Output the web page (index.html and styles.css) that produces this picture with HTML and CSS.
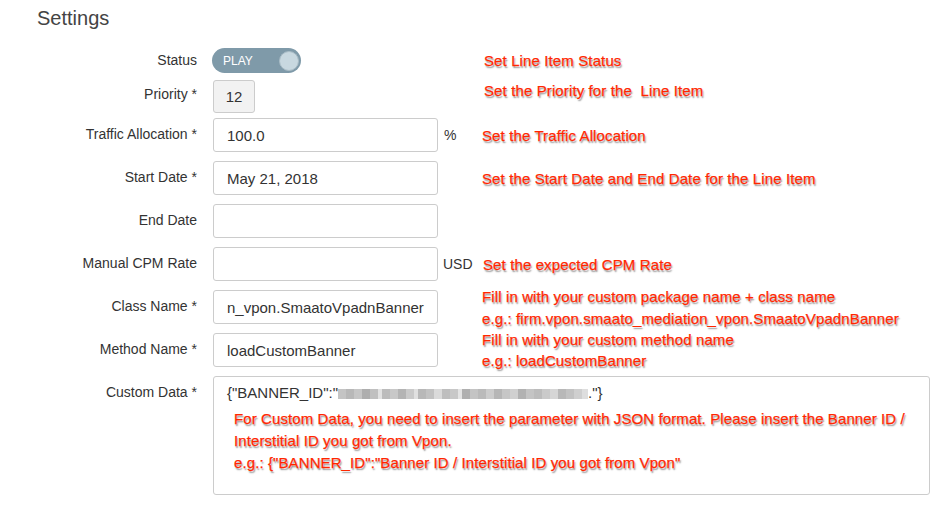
FILE: index.html
```html
<!DOCTYPE html>
<html>
<head>
<meta charset="utf-8">
<link rel="stylesheet" href="styles.css">
</head>
<body>
<div class="page">
  <h1 class="title">Settings</h1>
  <div class="form">
    <div class="row row-status">
      <div class="label lb-status">Status</div>
      <div class="control"><div class="toggle"><span class="toggle-text">PLAY</span><span class="knob"></span></div></div>
      <div class="unit"></div>
      <div class="note note-status">Set Line Item Status</div>
    </div>
    <div class="row row-priority">
      <div class="label lb-priority">Priority *</div>
      <div class="control"><div class="prio">12</div></div>
      <div class="unit"></div>
      <div class="note note-priority">Set the Priority for the&nbsp; Line Item</div>
    </div>
    <div class="row row-input">
      <div class="label">Traffic Allocation *</div>
      <div class="control"><div class="input">100.0</div></div>
      <div class="unit">%</div>
      <div class="note">Set the Traffic Allocation</div>
    </div>
    <div class="row row-input">
      <div class="label">Start Date *</div>
      <div class="control"><div class="input">May 21, 2018</div></div>
      <div class="unit"></div>
      <div class="note">Set the Start Date and End Date for the Line Item</div>
    </div>
    <div class="row row-input">
      <div class="label">End Date</div>
      <div class="control"><div class="input"></div></div>
      <div class="unit"></div>
      <div class="note"></div>
    </div>
    <div class="row row-input">
      <div class="label">Manual CPM Rate</div>
      <div class="control"><div class="input"></div></div>
      <div class="unit unit-usd">USD</div>
      <div class="note note-cpm">Set the expected CPM Rate</div>
    </div>
    <div class="row row-input">
      <div class="label">Class Name *</div>
      <div class="control"><div class="input">n_vpon.SmaatoVpadnBanner</div></div>
      <div class="unit"></div>
      <div class="note note-two note-class">Fill in with your custom package name + class name<br>e.g.: firm.vpon.smaato_mediation_vpon.SmaatoVpadnBanner</div>
    </div>
    <div class="row row-input">
      <div class="label">Method Name *</div>
      <div class="control"><div class="input">loadCustomBanner</div></div>
      <div class="unit"></div>
      <div class="note note-two note-method">Fill in with your custom method name<br>e.g.: loadCustomBanner</div>
    </div>
    <div class="row row-custom">
      <div class="label">Custom Data *</div>
      <div class="textarea">
        <div class="json">{"BANNER_ID":"<span class="blur"></span>."}</div>
        <div class="note-inner">For Custom Data, you need to insert the parameter with JSON format. Please insert the Banner ID /<br>Interstitial ID you got from Vpon.<br>e.g.: {"BANNER_ID":"Banner ID / Interstitial ID you got from Vpon"</div>
      </div>
    </div>
  </div>
</div>
</body>
</html>
```
FILE: styles.css
```css
* { box-sizing: border-box; }
html, body { margin: 0; padding: 0; background: #fff; }
body {
  font-family: "Liberation Sans", Arial, sans-serif;
  color: #333;
  width: 945px;
  height: 510px;
  overflow: hidden;
}
.page { padding-top: 6px; }
.title {
  margin: 0 0 0 37px;
  font-size: 20px;
  line-height: 24px;
  font-weight: normal;
  color: #444;
}
.form { padding-top: 18px; }
.row {
  display: grid;
  grid-template-columns: 213px 225px 44px 1fr;
  align-items: start;
}
.label {
  font-size: 14px;
  line-height: 20px;
  text-align: right;
  padding-right: 16px;
  padding-top: 6px;
  color: #333;
  white-space: nowrap;
}
.unit {
  font-size: 14px;
  line-height: 20px;
  padding-top: 7px;
  padding-left: 6px;
  color: #333;
}
.unit-usd { padding-left: 5px; }
.note {
  font-size: 15px;
  line-height: 22px;
  padding-top: 7px;
  color: #ff2600;
  white-space: nowrap;
  letter-spacing: 0.12px;
  -webkit-text-stroke: 0.25px #ff2600;
  text-shadow: 0 0 1px #fff, 1px 1.5px 1.5px rgba(0,0,0,0.45);
}
.note-cpm { padding-left: 1px; }

.row-status { height: 25px; margin-bottom: 7px; }
.lb-status { padding-top: 2px; }
.note-status { padding-top: 2px; padding-left: 2px; }
.toggle {
  width: 89px;
  height: 25px;
  border-radius: 13px;
  background: #7f9aa9;
  display: flex;
  align-items: center;
  justify-content: space-between;
  padding: 0 2px 0 11px;
  margin-left: -1px;
}
.toggle-text {
  color: #fff;
  font-size: 12px;
  line-height: 14px;
}
.knob {
  width: 20px;
  height: 20px;
  border-radius: 50%;
  background: #c8d8e0;
  border: 1px solid #a9bcc6;
}

.row-priority { height: 33px; margin-bottom: 5px; }
.lb-priority { padding-top: 4px; }
.note-priority { padding-top: 0; padding-left: 2px; }
.prio {
  width: 42px;
  height: 33px;
  border: 1px solid #ccc;
  border-radius: 3px;
  background: #f2f2f2;
  font-size: 15px;
  line-height: 31px;
  text-align: center;
  color: #333;
}

.row-input { height: 34px; margin-bottom: 9px; }
.input {
  width: 225px;
  height: 34px;
  border: 1px solid #ccc;
  border-radius: 3px;
  padding: 0 0 0 13px;
  font-size: 15px;
  line-height: 33px;
  color: #333;
  white-space: nowrap;
  overflow: hidden;
}
.note-two { padding-top: 0; margin-top: -4px; line-height: 22px; }
.note-method { line-height: 21px; padding-top: 0; }

.row-custom {
  grid-template-columns: 213px 717px;
}
.textarea {
  width: 717px;
  height: 119px;
  border: 1px solid #ccc;
  border-radius: 3px;
  padding: 6px 0 0 13px;
}
.json {
  font-size: 15px;
  line-height: 20px;
  color: #333;
  white-space: nowrap;
}
.blur {
  display: inline-block;
  width: 250px;
  height: 10px;
  vertical-align: -1px;
  background:
    linear-gradient(90deg,
      #c4c4c4 0 8px, #b8b8b8 8px 16px, #c6c6c6 16px 24px, #aeaeae 24px 32px, #c0c0c0 32px 40px,
      #e2e2e2 40px 44px, #bcbcbc 44px 52px, #c8c8c8 52px 60px, #b4b4b4 60px 68px, #cacaca 68px 76px,
      #e0e0e0 76px 80px, #b8b8b8 80px 88px, #c2c2c2 88px 96px, #dadada 96px 104px, #bebebe 104px 112px,
      #c8c8c8 112px 120px, #e4e4e4 120px 124px, #b0b0b0 124px 132px, #c4c4c4 132px 140px, #bababa 140px 148px,
      #cccccc 148px 156px, #b6b6b6 156px 164px, #c6c6c6 164px 172px, #d0d0d0 172px 180px, #b2b2b2 180px 188px,
      #c4c4c4 188px 196px, #bcbcbc 196px 204px, #cacaca 204px 212px, #d6d6d6 212px 220px, #b8b8b8 220px 228px,
      #c2c2c2 228px 236px, #cfcfcf 236px 244px, #dedede 244px 250px);
}
.note-inner {
  font-size: 15px;
  line-height: 22px;
  margin-top: 5px;
  padding-left: 7px;
  color: #ff2600;
  white-space: nowrap;
  letter-spacing: 0.1px;
  -webkit-text-stroke: 0.25px #ff2600;
  text-shadow: 0 0 1px #fff, 1px 1.5px 1.5px rgba(0,0,0,0.45);
}
```
